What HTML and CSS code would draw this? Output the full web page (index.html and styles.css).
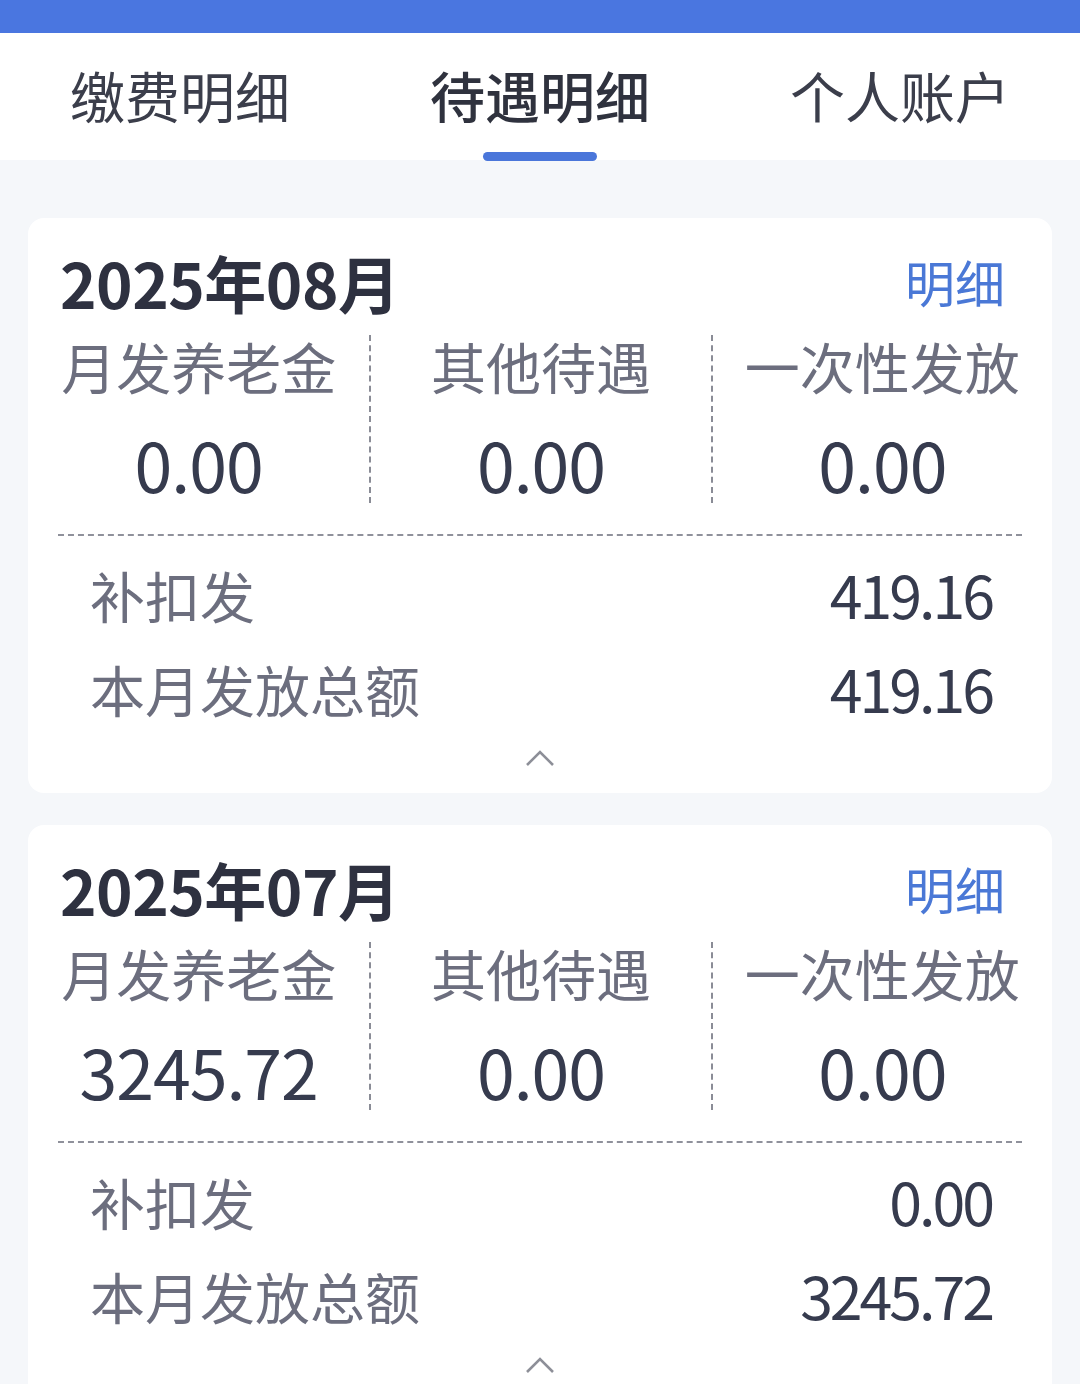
FILE: index.html
```html
<!DOCTYPE html>
<html lang="zh-CN">
<head>
<meta charset="utf-8">
<title>待遇明细</title>
<link rel="stylesheet" href="styles.css">
</head>
<body>
<div class="statusbar"></div>
<nav class="tabs">
  <div class="tab">缴费明细</div>
  <div class="tab active">待遇明细</div>
  <div class="tab">个人账户</div>
</nav>
<main class="list">
  <section class="card">
    <header class="card-head">
      <h2 class="month">2025年08月</h2>
      <a class="detail">明细</a>
    </header>
    <div class="cols">
      <div class="col"><div class="col-label">月发养老金</div><div class="col-value">0.00</div></div>
      <div class="col"><div class="col-label">其他待遇</div><div class="col-value">0.00</div></div>
      <div class="col"><div class="col-label">一次性发放</div><div class="col-value">0.00</div></div>
    </div>
    <div class="sep"></div>
    <div class="row"><span class="row-label">补扣发</span><span class="row-value">419.16</span></div>
    <div class="row"><span class="row-label">本月发放总额</span><span class="row-value">419.16</span></div>
    <div class="toggle"><svg width="30" height="20" viewBox="0 0 30 20"><path d="M2 17 L15 4 L28 17" fill="none" stroke="#8d8f98" stroke-width="2.6"/></svg></div>
  </section>
  <section class="card">
    <header class="card-head">
      <h2 class="month">2025年07月</h2>
      <a class="detail">明细</a>
    </header>
    <div class="cols">
      <div class="col"><div class="col-label">月发养老金</div><div class="col-value">3245.72</div></div>
      <div class="col"><div class="col-label">其他待遇</div><div class="col-value">0.00</div></div>
      <div class="col"><div class="col-label">一次性发放</div><div class="col-value">0.00</div></div>
    </div>
    <div class="sep"></div>
    <div class="row"><span class="row-label">补扣发</span><span class="row-value">0.00</span></div>
    <div class="row"><span class="row-label">本月发放总额</span><span class="row-value">3245.72</span></div>
    <div class="toggle"><svg width="30" height="20" viewBox="0 0 30 20"><path d="M2 17 L15 4 L28 17" fill="none" stroke="#8d8f98" stroke-width="2.6"/></svg></div>
  </section>
</main>
</body>
</html>
```
FILE: styles.css
```css
* { box-sizing: border-box; margin: 0; padding: 0; }
html, body { background: #f5f7fa; }
body {
  font-family: "Noto Sans CJK SC", "Noto Sans", sans-serif;
  width: 1080px;
  overflow: hidden;
}
.statusbar { height: 33px; background: #4a76e0; }
.tabs {
  display: flex;
  height: 127px;
  background: #fff;
}
.tab {
  flex: 1;
  position: relative;
  display: flex;
  align-items: center;
  justify-content: center;
  font-size: 55px;
  color: #3b3e4b;
  padding-bottom: 6px;
}
.tab.active { color: #2f323e; font-weight: 500; }
.tab.active::after {
  content: "";
  position: absolute;
  left: 50%;
  bottom: -1px;
  width: 114px;
  height: 9px;
  margin-left: -57px;
  border-radius: 5px;
  background: #4a76da;
}
.list {
  display: flex;
  flex-direction: column;
  gap: 32px;
  padding: 58px 28px 0;
}
.card {
  background: #fff;
  border-radius: 16px;
  padding: 34px 0 18px;
}
.card-head {
  display: flex;
  align-items: flex-start;
  justify-content: space-between;
  height: 70px;
  padding: 0 47px 0 32px;
}
.month {
  font-size: 62px;
  font-weight: 700;
  color: #2e3140;
  line-height: 60px;
  letter-spacing: -0.5px;
}
.detail {
  font-size: 50px;
  color: #4a78d6;
  line-height: 58px;
}
.cols {
  display: grid;
  grid-template-columns: repeat(3, 1fr);
  margin-top: 13px;
}
.col {
  display: flex;
  flex-direction: column;
  align-items: center;
}
.col + .col { border-left: 2px dashed #8a8c96; }
.col-label {
  font-size: 55px;
  line-height: 60px;
  height: 70px;
  color: #6c6e7e;
  white-space: nowrap;
}
.col-value {
  font-size: 68px;
  line-height: 62px;
  height: 70px;
  margin-top: 28px;
  color: #363b4e;
  letter-spacing: -1px;
}
.sep {
  margin: 31px 30px 0;
  border-top: 2px dashed #8f919b;
}
.row {
  display: flex;
  align-items: center;
  justify-content: space-between;
  height: 94px;
  padding: 0 60px 13px 62px;
}
.sep + .row { margin-top: 17px; }
.row-label {
  font-size: 55px;
  color: #6c6e7e;
}
.row-value {
  font-size: 59px;
  color: #363b4e;
  letter-spacing: -3px;
}
.toggle {
  display: flex;
  justify-content: center;
  align-items: center;
  height: 34px;
}
```
